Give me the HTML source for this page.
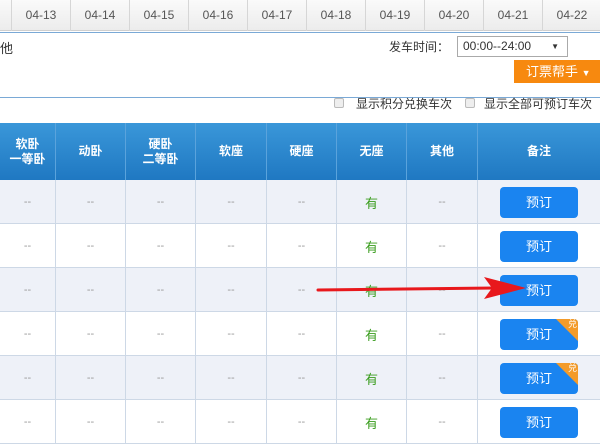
<!DOCTYPE html>
<html><head><meta charset="utf-8"><style>
*{margin:0;padding:0;box-sizing:border-box}
body{width:600px;height:429px;overflow:hidden;background:#fff;font-family:"Liberation Sans","Noto Sans CJK SC",sans-serif;position:relative;font-size:12px;color:#333}
.tabs{position:absolute;left:0;top:0;width:600px;height:31px;background:linear-gradient(#fafafa,#ececec);border-bottom:1px solid #cfcfcf}
.tab{position:absolute;top:0;height:31px;width:59px;border-left:1px solid #d6d6d6;text-align:center;line-height:30px;color:#555;font-size:12px}
.panel{position:absolute;left:-2px;top:32px;width:603px;height:66px;border:1px solid #7aa9d6;background:#fff}
.hdr{position:absolute;left:0;top:123px;width:600px;height:57px;background:linear-gradient(#3a97d9,#1f78c2);color:#fff;font-weight:bold;font-size:12px}
.hc{position:absolute;top:0;height:57px;display:flex;align-items:center;justify-content:center;text-align:center;line-height:15px;border-right:1px solid #5aa3dc}
.row{position:absolute;left:0;width:600px;height:44px;border-bottom:1px solid #cdd8e6}
.alt{background:#eef1f8}
.c{position:absolute;top:0;height:44px;border-right:1px solid #cdd8e6;display:flex;align-items:center;justify-content:center;color:#999;font-size:11px}
.g{color:#3a9d1e;font-size:13px}
.btn{position:absolute;left:500px;width:78px;height:31px;background:#1a84f0;border-radius:4px;color:#fff;font-size:13px;text-align:center;line-height:31px;overflow:hidden}
.tri{position:absolute;right:0;top:0;width:0;height:0;border-top:22px solid #f39b2a;border-left:22px solid transparent}
.tri b{position:absolute;right:1px;top:-23px;font-size:9px;color:#fff;font-weight:normal;line-height:12px}
</style></head><body>
<div class="tabs">
<div class="tab" style="left:11px">04-13</div><div class="tab" style="left:70px">04-14</div><div class="tab" style="left:129px">04-15</div><div class="tab" style="left:188px">04-16</div><div class="tab" style="left:247px">04-17</div><div class="tab" style="left:306px">04-18</div><div class="tab" style="left:365px">04-19</div><div class="tab" style="left:424px">04-20</div><div class="tab" style="left:483px">04-21</div><div class="tab" style="left:542px">04-22</div>
</div>
<div class="panel"></div>
<div style="position:absolute;left:0;top:38px;font-size:13px">他</div>
<div style="position:absolute;left:389px;top:38px;font-size:12px">发车时间：</div>
<div style="position:absolute;left:457px;top:36px;width:111px;height:21px;border:1px solid #aaa;background:#fff;font-size:12px;line-height:19px;padding-left:5px">00:00--24:00<span style="position:absolute;right:8px;font-size:8px">▼</span></div>
<div style="position:absolute;left:514px;top:60px;width:86px;height:23px;background:#f7890f;color:#fff;font-size:13px;line-height:23px;padding-left:12px">订票帮手 <span style="font-size:9px">▼</span></div>
<div style="position:absolute;left:334px;top:98px;width:10px;height:10px;border:1px solid #bbb;border-radius:2px;background:#eee"></div>
<div style="position:absolute;left:356px;top:95px;font-size:12px">显示积分兑换车次</div>
<div style="position:absolute;left:465px;top:98px;width:10px;height:10px;border:1px solid #bbb;border-radius:2px;background:#eee"></div>
<div style="position:absolute;left:484px;top:95px;font-size:12px;white-space:nowrap">显示全部可预订车次</div>
<div class="hdr">
<div class="hc" style="left:0;width:56px">软卧<br>一等卧</div>
<div class="hc" style="left:56px;width:70px">动卧</div>
<div class="hc" style="left:126px;width:70px">硬卧<br>二等卧</div>
<div class="hc" style="left:196px;width:71px">软座</div>
<div class="hc" style="left:267px;width:70px">硬座</div>
<div class="hc" style="left:337px;width:70px">无座</div>
<div class="hc" style="left:407px;width:71px">其他</div>
<div class="hc" style="left:478px;width:122px;border:none">备注</div>
</div>
<div id="rows"></div>
<script>
var tops=[180,224,268,312,356,400],h='';
var L=[0,56,126,196,267,337,407,478],W=[56,70,70,71,70,70,71,122];
tops.forEach(function(t,i){
h+='<div class="row'+(i%2==0?' alt':'')+'" style="top:'+t+'px">';
for(var j=0;j<7;j++){h+='<div class="c'+(j==5?' g':'')+'" style="left:'+L[j]+'px;width:'+W[j]+'px">'+(j==5?'有':'--')+'</div>';}
h+='<div class="btn" style="top:7px">预订'+((i==3||i==4)?'<div class="tri"><b>兑</b></div>':'')+'</div></div>';
});
document.getElementById('rows').innerHTML=h;
</script>
<svg style="position:absolute;left:0;top:0" width="600" height="429"><line x1="318" y1="290" x2="495" y2="288" stroke="#e8181c" stroke-width="3" stroke-linecap="round"/><polygon points="484,277 526,288 484,299 492,288" fill="#e8181c"/></svg>
</body></html>
